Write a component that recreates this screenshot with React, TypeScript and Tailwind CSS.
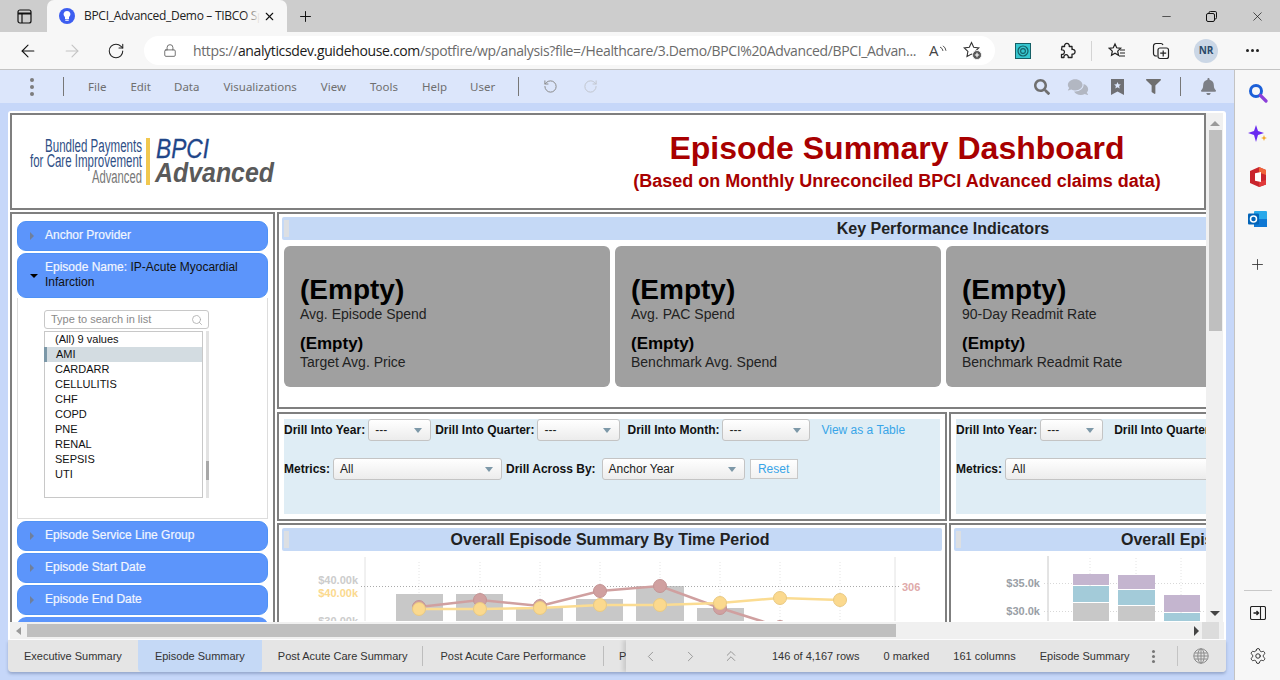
import React from 'react';
import {
  ArrowLeft,
  ArrowRight,
  ChevronLeft,
  ChevronRight,
  ChevronsUp,
  Lock,
  Minus,
  Plus,
  RotateCcw,
  RotateCw,
  Search,
  Settings,
  X,
} from 'lucide-react';
import { FaBell, FaComments, FaFilter, FaSearch } from 'react-icons/fa';

const menuItems = [
  { label: 'File', cls: 'ml-[24px]' },
  { label: 'Edit', cls: 'ml-[24px]' },
  { label: 'Data', cls: 'ml-[23px]' },
  { label: 'Visualizations', cls: 'ml-[24px]' },
  { label: 'View', cls: 'ml-[24px]' },
  { label: 'Tools', cls: 'ml-[24px]' },
  { label: 'Help', cls: 'ml-[24px]' },
  { label: 'User', cls: 'ml-[23px]' },
];

const listValues = ['CARDARR', 'CELLULITIS', 'CHF', 'COPD', 'PNE', 'RENAL', 'SEPSIS', 'UTI'];

const kpis = [
  { a: 'Avg. Episode Spend', b: 'Target Avg. Price' },
  { a: 'Avg. PAC Spend', b: 'Benchmark Avg. Spend' },
  { a: '90-Day Readmit Rate', b: 'Benchmark Readmit Rate' },
];

const bars1 = [
  { x: 396, w: 47, top: 594 },
  { x: 456, w: 47, top: 594 },
  { x: 516, w: 47, top: 608 },
  { x: 576, w: 47, top: 599 },
  { x: 636, w: 48, top: 586 },
  { x: 697, w: 47, top: 608 },
];
const redPts = [
  [419, 607],
  [480, 600],
  [540, 606],
  [600, 591],
  [660, 586],
  [720, 608],
  [780, 627],
];
const yellowPts = [
  [419, 609],
  [480, 609],
  [540, 608],
  [600, 605],
  [660, 605],
  [720, 603],
  [780, 598],
  [840, 600],
];

function Caret({ open }: { open?: boolean }) {
  if (open) {
    return <div className="w-0 h-0 border-x-[4px] border-x-transparent border-t-[4px] border-t-black" />;
  }
  return <div className="w-0 h-0 border-y-[4px] border-y-transparent border-l-[4px] border-l-[#6f7f9c]" />;
}

function AccordionHead({ label }: { label: string }) {
  return (
    <div className="h-[30px] shrink-0 rounded-[9px] bg-[#5c95fb] border border-[#4f92f5] flex items-center pl-[12px]">
      <Caret />
      <span className="ml-[11px] pb-[2px] text-[12px] [-webkit-text-stroke:0.2px_#f2f6ff] text-[#f2f6ff]">{label}</span>
    </div>
  );
}

function Dropdown({ value, cls }: { value: string; cls: string }) {
  return (
    <div className={`${cls} h-[22px] shrink-0 rounded-[3px] border border-[#c4c4c4] bg-gradient-to-b from-white to-[#ececec] flex items-center justify-between pl-[6px] pr-[8px] text-[12px] text-[#222]`}>
      <span>{value}</span>
      <div className="w-0 h-0 border-x-[4px] border-x-transparent border-t-[5px] border-t-[#7d98a8]" />
    </div>
  );
}

function DrillLeft() {
  return (
    <div className="w-[670px] shrink-0 h-full border-2 border-[#7f7f7f] p-[5px]">
      <div className="h-full bg-[#dfedf5] text-[12px] font-bold text-[#111]">
        <div className="flex items-center h-[22px]">
          <span>Drill Into Year:</span>
          <Dropdown value="---" cls="w-[63px] ml-[3px] font-normal" />
          <span className="ml-[4px]">Drill Into Quarter:</span>
          <Dropdown value="---" cls="w-[83px] ml-[3px] font-normal" />
          <span className="ml-[7px]">Drill Into Month:</span>
          <Dropdown value="---" cls="w-[88px] ml-[3px] font-normal" />
          <span className="ml-[11px] font-normal text-[#38a5e8]">View as a Table</span>
        </div>
        <div className="flex items-center h-[22px] mt-[17px]">
          <span>Metrics:</span>
          <Dropdown value="All" cls="w-[169px] ml-[3px] font-normal" />
          <span className="ml-[4px]">Drill Across By:</span>
          <Dropdown value="Anchor Year" cls="w-[143px] ml-[6px] font-normal" />
          <div className="ml-[5px] w-[48px] h-[20px] border border-[#c8c8c8] bg-gradient-to-b from-white to-[#f1f1f1] flex items-center justify-center font-normal text-[#38a5e8]">
            Reset
          </div>
        </div>
      </div>
    </div>
  );
}

function DrillRight() {
  return (
    <div className="w-[670px] shrink-0 h-full border-2 border-[#7f7f7f] p-[5px]">
      <div className="h-full bg-[#dfedf5] text-[12px] font-bold text-[#111]">
        <div className="flex items-center h-[22px]">
          <span>Drill Into Year:</span>
          <Dropdown value="---" cls="w-[63px] ml-[3px] font-normal" />
          <span className="ml-[11px]">Drill Into Quarter:</span>
        </div>
        <div className="flex items-center h-[22px] mt-[17px]">
          <span>Metrics:</span>
          <Dropdown value="All" cls="w-[300px] ml-[3px] font-normal" />
        </div>
      </div>
    </div>
  );
}

function TimeChart() {
  const pts = (p: number[][]) => p.map((c) => c.join(',')).join(' ');
  return (
    <svg className="block" width="660" height="70" viewBox="282 551 660 70">
      <line x1="365" y1="557" x2="365" y2="622" stroke="#e2e2e2" />
      <line x1="895" y1="557" x2="895" y2="622" stroke="#e2e2e2" />
      {[419, 480, 540, 600, 660, 720, 780, 840].map((x) => (
        <line key={x} x1={x} y1="562" x2={x} y2="622" stroke="#e4e4e4" strokeDasharray="1 2" />
      ))}
      {bars1.map((b) => (
        <rect key={b.x} x={b.x} y={b.top} width={b.w} height={40} fill="#c8c8c8" />
      ))}
      <line x1="361" y1="586.5" x2="899" y2="586.5" stroke="#aaaaaa" strokeDasharray="1 2" />
      <polyline points={pts(redPts)} fill="none" stroke="#d0a0a0" strokeWidth="2.5" />
      {redPts.map((p) => (
        <circle key={p[0]} cx={p[0]} cy={p[1]} r="6.5" fill="#d0a0a0" stroke="#c49494" strokeWidth="1" />
      ))}
      <polyline points={pts(yellowPts)} fill="none" stroke="#fbdc92" strokeWidth="2.5" />
      {yellowPts.map((p) => (
        <circle key={p[0]} cx={p[0]} cy={p[1]} r="6.5" fill="#fbd98e" stroke="#e9c983" strokeWidth="1" />
      ))}
      <g fontFamily="Liberation Sans" fontSize="11" fontWeight="700" textAnchor="end">
        <text x="358" y="584" fill="#cccccc">$40.00k</text>
        <text x="358" y="597" fill="#fbd98e">$40.00k</text>
        <text x="358" y="625" fill="#cccccc">$30.00k</text>
      </g>
      <text x="902" y="591" fontFamily="Liberation Sans" fontSize="11" fontWeight="700" fill="#e0aaaa">306</text>
    </svg>
  );
}

function StackChart() {
  return (
    <svg className="block" width="300" height="70" viewBox="954 551 300 70">
      <line x1="1048" y1="556" x2="1048" y2="622" stroke="#c8c8c8" />
      {[1090, 1136, 1181].map((x) => (
        <line key={x} x1={x} y1="558" x2={x} y2="622" stroke="#e4e4e4" strokeDasharray="1 2" />
      ))}
      <line x1="1044" y1="583.5" x2="1206" y2="583.5" stroke="#d8d8d8" strokeDasharray="1 2" />
      <line x1="1044" y1="611.5" x2="1206" y2="611.5" stroke="#d8d8d8" strokeDasharray="1 2" />
      <rect x="1073" y="574" width="36" height="11" fill="#c4b5cf" />
      <rect x="1073" y="586" width="36" height="16" fill="#a3cbd9" />
      <rect x="1073" y="603" width="36" height="19" fill="#c8c8c8" />
      <rect x="1118" y="575" width="37" height="14" fill="#c4b5cf" />
      <rect x="1118" y="590" width="37" height="15" fill="#a3cbd9" />
      <rect x="1118" y="606" width="37" height="16" fill="#c8c8c8" />
      <rect x="1164" y="595" width="36" height="17" fill="#c4b5cf" />
      <rect x="1164" y="613" width="36" height="9" fill="#a3cbd9" />
      <g fontFamily="Liberation Sans" fontSize="11" fontWeight="700" fill="#9aa0a6" textAnchor="end">
        <text x="1040" y="587">$35.0k</text>
        <text x="1040" y="615">$30.0k</text>
      </g>
    </svg>
  );
}

function Logo() {
  return (
    <svg width="250" height="60" viewBox="28 132 250 60" className="block">
      <g fontFamily="Liberation Sans" fontSize="18" textAnchor="end">
        <text x="142" y="152" fill="#2f4f86" textLength="97" lengthAdjust="spacingAndGlyphs">Bundled Payments</text>
        <text x="142" y="167" fill="#2f4f86" textLength="112" lengthAdjust="spacingAndGlyphs">for Care Improvement</text>
        <text x="142" y="183" fill="#777777" textLength="50" lengthAdjust="spacingAndGlyphs">Advanced</text>
      </g>
      <rect x="146" y="138" width="4" height="47" fill="#f1c84f" />
      <text x="156" y="158" fontFamily="Liberation Sans" fontSize="27" fontStyle="italic" fill="#1f4689" stroke="#1f4689" strokeWidth="0.3" textLength="53" lengthAdjust="spacingAndGlyphs">BPCI</text>
      <text x="155" y="182" fontFamily="Liberation Sans" fontSize="28" fontStyle="italic" fontWeight="700" fill="#5a5a5a" textLength="119" lengthAdjust="spacingAndGlyphs">Advanced</text>
    </svg>
  );
}

function BrowserTabs() {
  return (
    <div className="h-[32px] shrink-0 bg-[#cdcdcd] flex items-end relative">
      <svg className="absolute left-[17px] top-[9px]" width="15" height="15" viewBox="0 0 15 15" fill="none" stroke="#111" strokeWidth="1.2">
        <rect x="1" y="1" width="13" height="13" rx="2" />
        <line x1="1" y1="4.5" x2="14" y2="4.5" strokeWidth="2" />
        <line x1="5" y1="4" x2="5" y2="14" />
      </svg>
      <div className="ml-[47px] w-[240px] h-[32px] bg-[#f7f7f7] rounded-t-[7px] flex items-center pl-[12px]">
        <svg className="shrink-0" width="16" height="16" viewBox="0 0 16 16">
          <circle cx="8" cy="8" r="8" fill="#3d5ef0" />
          <path d="M8 3a3.4 3.4 0 0 0-2 6.2V11h4V9.2A3.4 3.4 0 0 0 8 3z" fill="#fff" />
          <rect x="6.3" y="11.6" width="3.4" height="1.2" fill="#fff" />
        </svg>
        <div className="ml-[9px] w-[176px] shrink-0 overflow-hidden whitespace-nowrap text-[12px] text-[#222] font-['Open_Sans',sans-serif] tracking-[-0.3px] relative">
          BPCI_Advanced_Demo – TIBCO Spotfire
          <div className="absolute right-0 top-0 w-[16px] h-full bg-gradient-to-r from-transparent to-[#f7f7f7]" />
        </div>
        <X className="w-[13px] h-[13px] shrink-0 ml-[3px] text-[#111]" strokeWidth={2} />
      </div>
      <Plus className="w-[17px] h-[17px] ml-[10px] mb-[7px] text-[#111]" strokeWidth={1.4} />
      <div className="ml-auto flex items-center h-[32px] pr-[15px] text-[#111]">
        <Minus className="w-[13px] h-[13px]" strokeWidth={1.2} />
        <svg className="ml-[33px]" width="11" height="11" viewBox="0 0 11 11" fill="none" stroke="#111">
          <rect x="0.5" y="2.5" width="8" height="8" rx="1.5" />
          <path d="M3 2.5V1.8A1.3 1.3 0 0 1 4.3.5h4.9a1.3 1.3 0 0 1 1.3 1.3v4.9A1.3 1.3 0 0 1 9.2 8h-.7" />
        </svg>
        <X className="w-[15px] h-[15px] ml-[33px]" strokeWidth={1.1} />
      </div>
    </div>
  );
}

function AddressBar() {
  return (
    <div className="h-[38px] shrink-0 bg-[#f7f7f7] flex items-center relative border-b border-[#c3c3c3]">
      <ArrowLeft className="w-[20px] h-[20px] ml-[18px] text-[#111]" strokeWidth={1.3} />
      <ArrowRight className="w-[20px] h-[20px] ml-[24px] text-[#c4c4c4]" strokeWidth={1.3} />
      <RotateCw className="w-[18px] h-[18px] ml-[25px] text-[#222]" strokeWidth={1.4} />
      <div className="ml-[19px] w-[851px] h-[29px] rounded-full bg-white flex items-center pl-[19px]">
        <Lock className="w-[14px] h-[15px] text-[#555]" strokeWidth={1.4} />
        <span className="ml-[16px] text-[14px] whitespace-nowrap text-[#6b6b6b] font-['Open_Sans',sans-serif] tracking-[-0.36px]">
          https://<span className="text-[#1b1b1b]">analyticsdev.guidehouse.com</span>/spotfire/wp/analysis?file=/Healthcare/3.Demo/BPCI%20Advanced/BPCI_Advan...
        </span>
        <span className="absolute left-[929px] text-[15px] text-[#444] font-['Open_Sans',sans-serif]">A</span>
        <svg className="absolute left-[939px]" width="8" height="12" viewBox="0 0 8 12" fill="none" stroke="#555">
          <path d="M1 2a5 5 0 0 1 3 4M4 0.8a7 7 0 0 1 3 5" />
        </svg>
        <svg className="absolute left-[963px]" width="19" height="19" viewBox="0 0 19 19" fill="none" stroke="#333" strokeWidth="1.1">
          <path d="M8.5 1.5l2.2 4.7 5.1.7-3.7 3.5.9 5-4.5-2.4-4.5 2.4.9-5L1.2 6.9l5.1-.7z" />
          <circle cx="14" cy="14" r="4.5" fill="#555" stroke="#fff" strokeWidth="0.8" />
          <path d="M14 11.8v4.4M11.8 14h4.4" stroke="#fff" />
        </svg>
      </div>
      <svg className="ml-[20px]" width="16" height="16" viewBox="0 0 16 16">
        <rect x="0.5" y="0.5" width="15" height="15" fill="#36c6cf" stroke="#155f66" />
        <circle cx="8" cy="8" r="5" fill="none" stroke="#155f66" strokeWidth="1.2" />
        <circle cx="8" cy="8" r="2.4" fill="none" stroke="#155f66" strokeWidth="1.1" />
      </svg>
      <svg className="ml-[27px]" width="18" height="18" viewBox="0 0 18 18" fill="none" stroke="#222" strokeWidth="1.3" strokeLinejoin="round">
        <path d="M4 4.5h2.6a2.4 2.4 0 1 1 4.6 0H14v3a2.4 2.4 0 1 1 0 4.6v3.4H10.2a2.2 2.2 0 1 0-4.2 0H3.5v-3.2a2.3 2.3 0 1 0 0-4.4z" />
      </svg>
      <div className="ml-[15px] w-px h-[20px] bg-[#d4d4d4]" />
      <svg className="ml-[16px]" width="18" height="18" viewBox="0 0 18 18" fill="none" stroke="#222" strokeWidth="1.2">
        <path d="M7 2l1.7 3.8 4 .5-3 2.8.8 4.2L7 11.2 3.5 13.3l.8-4.2-3-2.8 4-.5z" />
        <path d="M12 8h5M12 11h5M11 14h6" />
      </svg>
      <svg className="ml-[26px]" width="18" height="18" viewBox="0 0 18 18" fill="none" stroke="#222" strokeWidth="1.2">
        <path d="M5 14H4a2.5 2.5 0 0 1-2.5-2.5V4A2.5 2.5 0 0 1 4 1.5h5A2.5 2.5 0 0 1 11 3" />
        <rect x="6" y="6" width="10.5" height="10.5" rx="2" />
        <path d="M11.2 8.5v6M8.2 11.2h6" />
      </svg>
      <div className="ml-[24px] w-[24px] h-[24px] rounded-full bg-[#cbd7e6] flex items-center justify-center text-[10px] font-bold text-[#2b4a6b] font-['Open_Sans',sans-serif]">
        NR
      </div>
      <div className="ml-[28px] flex gap-[2px]">
        <div className="w-[3px] h-[3px] rounded-full bg-[#222]" />
        <div className="w-[3px] h-[3px] rounded-full bg-[#222]" />
        <div className="w-[3px] h-[3px] rounded-full bg-[#222]" />
      </div>
    </div>
  );
}

function SpotfireMenu() {
  return (
    <div className="h-[33px] shrink-0 bg-[#dce6fb] flex items-center text-[11.5px] text-[#6f6f6f]">
      <div className="ml-[30px] flex flex-col gap-[3px]">
        <div className="w-[4px] h-[4px] rounded-full bg-[#7d7d7d]" />
        <div className="w-[4px] h-[4px] rounded-full bg-[#7d7d7d]" />
        <div className="w-[4px] h-[4px] rounded-full bg-[#7d7d7d]" />
      </div>
      <div className="ml-[29px] w-px h-[19px] bg-[#777]" />
      {menuItems.map((m) => (
        <span key={m.label} className={m.cls}>{m.label}</span>
      ))}
      <div className="ml-[23px] w-px h-[19px] bg-[#777]" />
      <RotateCcw className="w-[15px] h-[15px] ml-[24px] text-[#8a8a8a]" strokeWidth={1.6} />
      <RotateCw className="w-[15px] h-[15px] ml-[25px] text-[#c2c6cf]" strokeWidth={1.6} />
      <FaSearch className="w-[16px] h-[16px] ml-[436px] text-[#6f6f6f]" />
      <FaComments className="w-[24px] h-[18px] ml-[16px] text-[#b2b7c2]" />
      <svg className="ml-[21px]" width="13" height="16" viewBox="0 0 13 16">
        <path d="M0 0h13v16l-6.5-3.6L0 16z" fill="#6f7074" />
        <path d="M6.5 3l1 2.3 2.4.2-1.8 1.6.6 2.4-2.2-1.3-2.2 1.3.6-2.4-1.8-1.6 2.4-.2z" fill="#dce6fb" />
      </svg>
      <FaFilter className="w-[15px] h-[15px] ml-[22px] text-[#6f6f6f]" />
      <div className="ml-[19px] w-px h-[19px] bg-[#777]" />
      <FaBell className="w-[15px] h-[17px] ml-[20px] text-[#7c7f86]" />
    </div>
  );
}

function SidePanel() {
  return (
    <div className="w-[265px] shrink-0 h-full border-2 border-b-0 border-[#7f7f7f] px-[5px] pt-[7px] flex flex-col gap-[2px] overflow-hidden">
      <AccordionHead label="Anchor Provider" />
      <div className="shrink-0">
        <div className="h-[45px] rounded-[9px] bg-[#5c95fb] border border-[#4f92f5] flex items-center pl-[12px]">
          <Caret open />
          <div className="ml-[7px] pb-[2px] w-[205px] text-[12px] leading-[15px] text-[#111]">
            <span className="text-[#f2f6ff] [-webkit-text-stroke:0.2px_#f2f6ff]">Episode Name: </span>IP-Acute Myocardial Infarction
          </div>
        </div>
        <div className="h-[221px] border border-t-0 border-[#dddddd] pl-[26px] pt-[12px]">
          <div className="w-[165px] h-[19px] rounded-[3px] border border-[#c8c8c8] flex items-center justify-between pl-[6px] pr-[5px] text-[11px] text-[#8a8a8a]">
            <span>Type to search in list</span>
            <Search className="w-[12px] h-[12px] text-[#aaaaaa]" strokeWidth={1.6} />
          </div>
          <div className="flex mt-[2px]">
            <div className="w-[159px] h-[167px] border border-[#c8c8c8] text-[11px] leading-[15px] text-[#111]">
              <div className="h-[15px] pl-[10px]">(All) 9 values</div>
              <div className="h-[15px] pl-[9px] bg-[#d3dce1] border-l-[3px] border-[#7c98a8] -ml-px">AMI</div>
              {listValues.map((v) => (
                <div key={v} className="h-[15px] pl-[10px]">{v}</div>
              ))}
            </div>
            <div className="ml-[3px] w-[3px] h-[167px] bg-[#e2e2e2] pt-[130px]">
              <div className="h-[19px] bg-[#a8a8a8]" />
            </div>
          </div>
        </div>
      </div>
      <AccordionHead label="Episode Service Line Group" />
      <AccordionHead label="Episode Start Date" />
      <AccordionHead label="Episode End Date" />
      <div className="h-[30px] shrink-0 rounded-[9px] bg-[#5c95fb]" />
    </div>
  );
}

function TitleBar({ title, cls }: { title: string; cls: string }) {
  return (
    <div className={`h-[23px] rounded-[2px] bg-[#c5d9f6] flex items-center relative text-[16px] font-bold text-[#222] ${cls}`}>
      <div className="absolute left-[2px] top-[3px] w-[5px] h-[17px] bg-[#dcdfe3]" />
      <span className="whitespace-nowrap">{title}</span>
    </div>
  );
}

function Dashboard() {
  return (
    <div className="flex-1 min-h-0 flex flex-col gap-[2px] overflow-hidden font-['Liberation_Sans',Arial,sans-serif]">
      <div className="h-[97px] shrink-0 border-2 border-[#7f7f7f] flex items-center relative">
        <div className="ml-[16px]">
          <Logo />
        </div>
        <div className="ml-[339px] w-[560px] text-center font-bold text-[#a80000] flex flex-col items-center mt-[-2px]">
          <div className="text-[32px] leading-[40px]">Episode Summary Dashboard</div>
          <div className="text-[18px] leading-[24px] mt-[1px]">(Based on Monthly Unreconciled BPCI Advanced claims data)</div>
        </div>
      </div>
      <div className="flex-1 min-h-0 flex gap-[2px]">
        <SidePanel />
        <div className="flex-1 min-w-0 overflow-hidden flex flex-col">
          <div className="w-[1342px] h-[197px] shrink-0 border-2 border-[#7f7f7f] px-[3px] pt-[3px]">
            <TitleBar title="Key Performance Indicators" cls="justify-center pr-[10px]" />
            <div className="flex gap-[5px] mt-[6px] ml-[2px]">
              {kpis.map((k) => (
                <div key={k.a} className="w-[326px] h-[141px] shrink-0 rounded-[6px] bg-[#a0a0a0] pl-[16px] pt-[28px] text-[#111]">
                  <div className="text-[28px] leading-[32px] font-bold text-black">(Empty)</div>
                  <div className="text-[14px] leading-[17px] text-[#222]">{k.a}</div>
                  <div className="text-[17px] leading-[20px] font-bold text-black mt-[11px]">(Empty)</div>
                  <div className="text-[14px] leading-[17px] text-[#222]">{k.b}</div>
                </div>
              ))}
            </div>
          </div>
          <div className="flex gap-[2px] h-[109px] shrink-0 mt-[3px]">
            <DrillLeft />
            <DrillRight />
          </div>
          <div className="flex gap-[2px] flex-1 min-h-0 mt-[2px]">
            <div className="w-[670px] shrink-0 h-[120px] border-2 border-[#7f7f7f] border-b-0 px-[3px] pt-[3px]">
              <TitleBar title="Overall Episode Summary By Time Period" cls="justify-center pr-[4px]" />
              <TimeChart />
            </div>
            <div className="w-[670px] shrink-0 h-[120px] border-2 border-[#7f7f7f] border-b-0 px-[3px] pt-[3px]">
              <TitleBar title="Overall Episode Summary By Other" cls="pl-[167px]" />
              <StackChart />
            </div>
          </div>
        </div>
      </div>
    </div>
  );
}

function VerticalScroll() {
  return (
    <div className="w-[17px] shrink-0 bg-[#f0f0f0] flex flex-col items-center pt-[8px] pl-px">
      <div className="w-0 h-0 border-x-[5px] border-x-transparent border-b-[5px] border-b-[#9a9a9a]" />
      <div className="w-[13px] h-[201px] mt-[4px] bg-[#bfbfbf]" />
      <div className="mt-auto mb-[6px] w-0 h-0 border-x-[5px] border-x-transparent border-t-[5px] border-t-[#444]" />
    </div>
  );
}

function HorizontalScroll() {
  return (
    <div className="h-[17px] shrink-0 bg-[#f0f0f0] flex items-center">
      <div className="ml-[6px] w-0 h-0 border-y-[4px] border-y-transparent border-r-[5px] border-r-[#9a9a9a]" />
      <div className="ml-[6px] w-[869px] h-[13px] bg-[#bfbfbf]" />
      <div className="ml-[298px] w-0 h-0 border-y-[5px] border-y-transparent border-l-[5px] border-l-[#444]" />
      <div className="ml-[3px] w-[17px] h-[17px] bg-[#dcdcdc]" />
    </div>
  );
}

function BottomTabs() {
  return (
    <div className="mx-[8px] h-[32px] shrink-0 rounded-b-[4px] bg-[#e5e5e5] shadow-[0_2px_3px_rgba(90,110,150,0.45)] flex items-center text-[11px] text-[#333] relative overflow-hidden font-['Liberation_Sans',Arial,sans-serif]">
      <span className="ml-[16px]">Executive Summary</span>
      <div className="ml-[16px] w-[124px] h-[32px] rounded-b-[4px] bg-[#c5d9f6] flex items-center justify-center">Episode Summary</div>
      <span className="ml-[16px]">Post Acute Care Summary</span>
      <div className="ml-[15px] w-px h-[20px] bg-[#bdbdbd]" />
      <span className="ml-[17px]">Post Acute Care Performance</span>
      <div className="ml-[17px] w-px h-[20px] bg-[#bdbdbd]" />
      <span className="ml-[15px]">P</span>
      <div className="absolute left-[618px] right-0 top-0 h-full bg-[#e5e5e5] shadow-[-3px_0_4px_rgba(0,0,0,0.12)] flex items-center">
        <ChevronLeft className="w-[17px] h-[17px] ml-[16px] text-[#8c8c8c]" strokeWidth={1.2} />
        <ChevronRight className="w-[17px] h-[17px] ml-[23px] text-[#8c8c8c]" strokeWidth={1.2} />
        <ChevronsUp className="w-[18px] h-[18px] ml-[23px] text-[#8c8c8c]" strokeWidth={1.2} />
        <span className="ml-[32px]">146 of 4,167 rows</span>
        <span className="ml-[24px]">0 marked</span>
        <span className="ml-[24px]">161 columns</span>
        <span className="ml-[24px]">Episode Summary</span>
        <div className="ml-[22px] flex flex-col gap-[2px]">
          <div className="w-[3px] h-[3px] rounded-full bg-[#777]" />
          <div className="w-[3px] h-[3px] rounded-full bg-[#777]" />
          <div className="w-[3px] h-[3px] rounded-full bg-[#777]" />
        </div>
        <div className="ml-[22px] w-px h-[20px] bg-[#c4c4c4]" />
        <svg className="ml-[15px]" width="16" height="16" viewBox="0 0 16 16" fill="none" stroke="#8c8c8c" strokeWidth="1">
          <circle cx="8" cy="8" r="7.2" />
          <ellipse cx="8" cy="8" rx="3.2" ry="7.2" />
          <path d="M8 .8v14.4M1.5 5h13M.8 8h14.4M1.5 11h13" />
        </svg>
      </div>
    </div>
  );
}

function EdgeSidebar() {
  return (
    <div className="w-[46px] shrink-0 bg-[#f7f7f7] border-l border-[#c3c3c3] flex flex-col items-center pt-[13px]">
      <svg width="20" height="20" viewBox="0 0 20 20" fill="none">
        <circle cx="8" cy="8" r="5.5" stroke="#1b5fd8" strokeWidth="3" />
        <path d="M12.5 12.5L18 18" stroke="#8b3fd9" strokeWidth="3.2" strokeLinecap="round" />
      </svg>
      <svg className="mt-[21px]" width="20" height="20" viewBox="0 0 20 20">
        <path d="M8 1l2 6 6 2-6 2-2 7-2-7-6-2 6-2z" fill="#6a2bf0" />
        <path d="M16 11l.8 2.2 2.2.8-2.2.8-.8 2.2-.8-2.2-2.2-.8 2.2-.8z" fill="#f5a623" />
      </svg>
      <svg className="mt-[23px]" width="18" height="20" viewBox="0 0 18 20">
        <path d="M10 0L1 4v12l9 4 7-2.5V3z" fill="#c9252d" />
        <path d="M10 0l7 3v5l-7-2.5z" fill="#f0653a" />
        <path d="M10 20l7-2.5V13l-7 1.5z" fill="#e03a3a" />
        <path d="M6 6.2l6-1.2v10l-6-1.2z" fill="#fff" />
      </svg>
      <svg className="mt-[22px]" width="20" height="20" viewBox="0 0 20 20">
        <rect x="6" y="2" width="13" height="16" rx="1" fill="#28a8ea" />
        <path d="M6 10h13v8H6z" fill="#0f78d4" />
        <rect x="0" y="4.5" width="11" height="11" rx="1" fill="#0364b8" />
        <circle cx="5.5" cy="10" r="3" fill="none" stroke="#fff" strokeWidth="1.5" />
      </svg>
      <Plus className="w-[17px] h-[17px] mt-[27px] text-[#333]" strokeWidth={1.2} />
      <div className="mt-auto w-[28px] h-px bg-[#c9c9c9]" />
      <svg className="mt-[15px]" width="16" height="14" viewBox="0 0 16 14" fill="none" stroke="#222" strokeWidth="1.1">
        <rect x="0.5" y="0.5" width="15" height="13" rx="1.5" />
        <line x1="10.5" y1="0.5" x2="10.5" y2="13.5" />
        <path d="M3.5 7h5M6.5 5l2 2-2 2" strokeWidth="1.4" />
      </svg>
      <Settings className="w-[18px] h-[18px] mt-[27px] mb-[15px] text-[#222]" strokeWidth={1.2} />
    </div>
  );
}

export default function App() {
  return (
    <div className="w-[1280px] h-[680px] overflow-hidden flex flex-col bg-white">
      <BrowserTabs />
      <AddressBar />
      <div className="flex-1 min-h-0 flex">
        <div className="flex-1 min-w-0 flex flex-col bg-[#c6d7f9]">
          <SpotfireMenu />
          <div className="flex-1 min-h-0 flex flex-col pt-[8px] pb-[8px]">
            <div className="mx-[8px] flex-1 min-h-0 bg-white rounded-t-[3px] p-[2px] pb-[1px] flex flex-col">
              <div className="flex-1 min-h-0 flex pr-px">
                <Dashboard />
                <VerticalScroll />
              </div>
              <HorizontalScroll />
            </div>
            <BottomTabs />
          </div>
        </div>
        <EdgeSidebar />
      </div>
    </div>
  );
}
